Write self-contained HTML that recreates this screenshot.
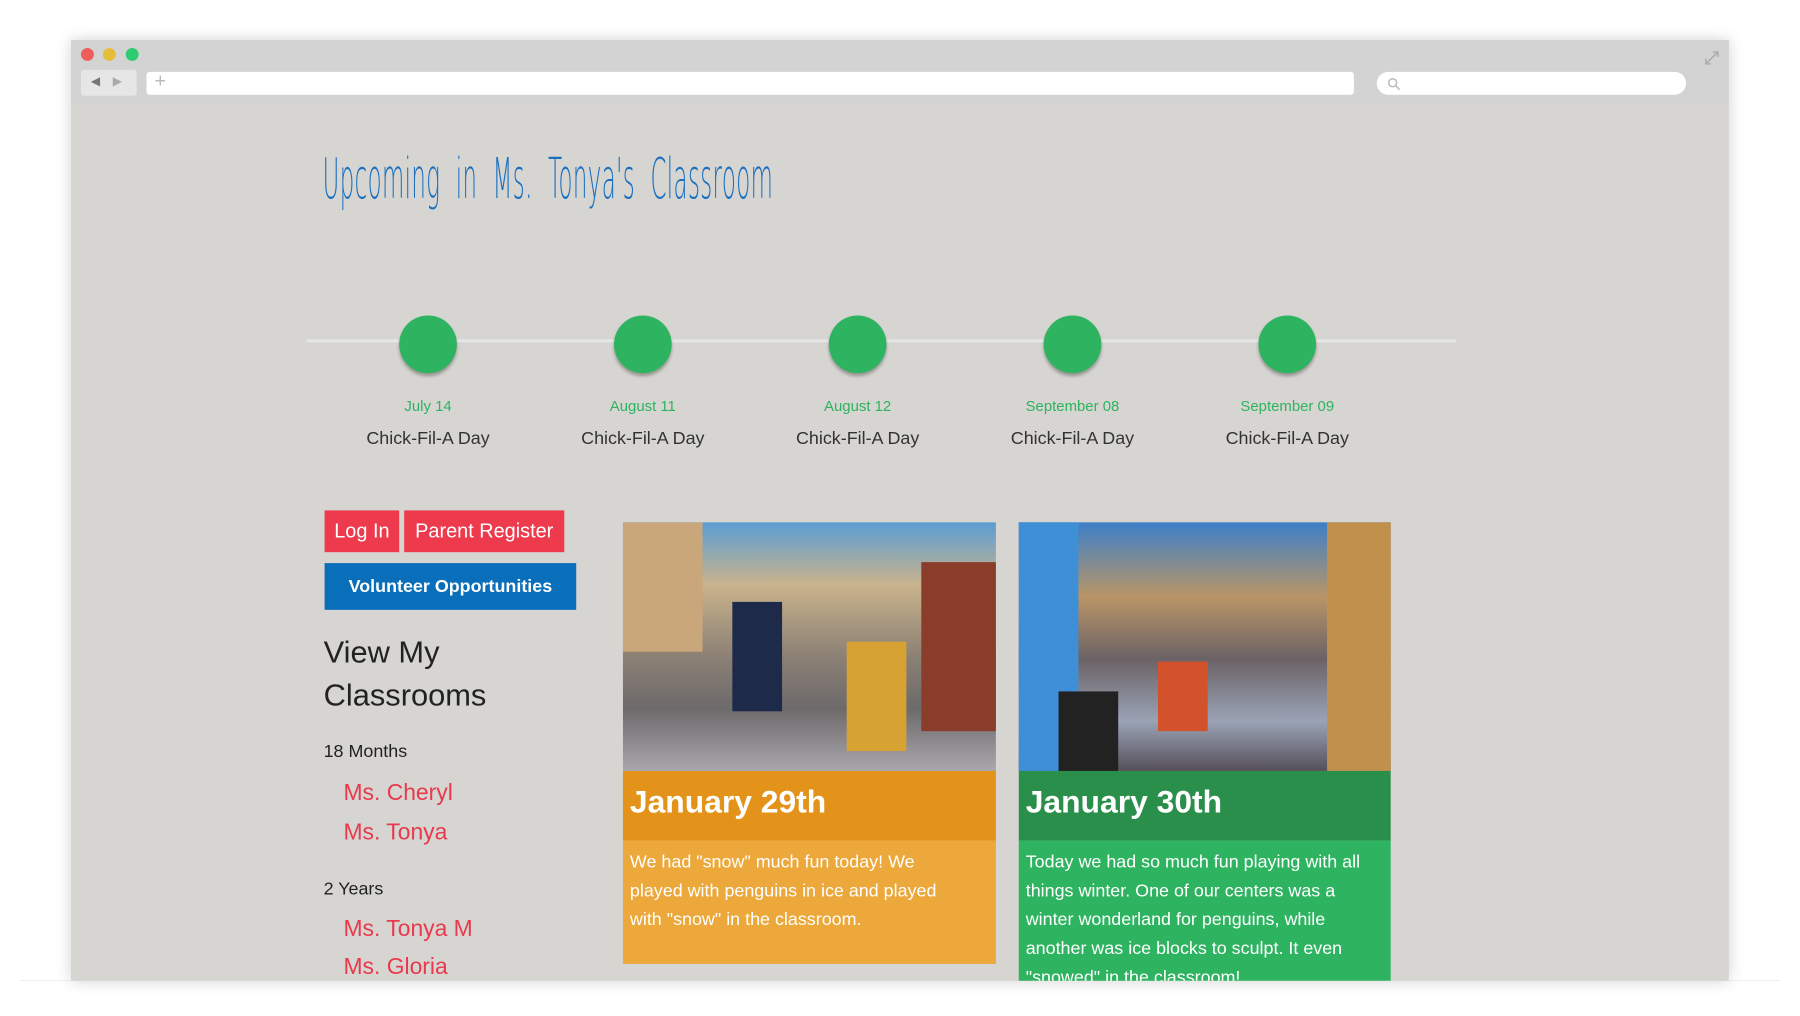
<!DOCTYPE html>
<html><head><meta charset="utf-8"><style>
*{margin:0;padding:0;box-sizing:border-box}
body{width:1800px;height:1016px;background:#fff;position:relative;overflow:hidden;font-family:"Liberation Sans",sans-serif}
.win{position:absolute;left:71px;top:40px;width:1667px;height:946px;background:#d6d5d1;box-shadow:0 0 14px rgba(0,0,0,.18);overflow:hidden;transform:scale(.9945);transform-origin:0 0}
.bar{position:absolute;left:0;top:0;width:100%;height:64px;background:#d3d3d3}
.dot{position:absolute;top:8px;width:13px;height:13px;border-radius:50%}
.abs{position:absolute}
.addr{position:absolute;left:76px;top:32px;width:1214px;height:23px;background:#fff;border-radius:3px}
.srch{position:absolute;left:1313px;top:32px;width:311px;height:23px;background:#fff;border-radius:12px}
.nav{position:absolute;left:10px;top:30px;width:56px;height:26px;background:#e6e6e6;border-radius:3px}
.t{position:absolute;white-space:nowrap}
.circ{position:absolute;top:277px;width:58px;height:58px;border-radius:50%;background:#2eb360;box-shadow:0 3px 3px rgba(0,0,0,.3)}
.date{position:absolute;top:360px;width:200px;text-align:center;color:#2eb360;font-size:15px}
.lab{position:absolute;top:390px;width:200px;text-align:center;color:#333;font-size:18px}
.btn{position:absolute;color:#fff;font-size:20px;text-align:center}
.red{color:#e8394d;font-size:23px}
.body{color:#fff;font-size:18px;line-height:29px}
</style></head><body>
<div style="position:absolute;left:20px;top:980px;width:1760px;height:1px;background:#eee"></div>
<div class="win">
 <div class="bar">
  <div class="dot" style="left:10px;background:#ee5c5b"></div>
  <div class="dot" style="left:32px;background:#e6bd39"></div>
  <div class="dot" style="left:55px;background:#2ecc71"></div>
  <div class="nav"><span class="t" style="left:10px;top:4px;font-size:12px;color:#777">◀</span><span class="t" style="left:32px;top:4px;font-size:12px;color:#aaa">▶</span></div>
  <div class="addr"><span class="t" style="left:8px;top:-1px;font-size:20px;color:#bbb">+</span></div>
  <div class="srch"><svg class="abs" style="left:10px;top:5px" width="14" height="14"><circle cx="6" cy="6" r="4" fill="none" stroke="#bbb" stroke-width="1.5"/><line x1="9" y1="9" x2="13" y2="13" stroke="#bbb" stroke-width="1.5"/></svg></div>
  <svg class="abs" style="left:1642px;top:10px" width="16" height="16"><path d="M2 14L14 2M9 2h5v5M2 9v5h5" fill="none" stroke="#aaa" stroke-width="1.5"/></svg>
 </div>
 <div class="t" style="left:253px;top:108px;font-size:56px;color:#1a6fbf;transform:scaleX(.41);transform-origin:left top;letter-spacing:1px;font-family:'DejaVu Sans',sans-serif;font-weight:200">Upcoming&nbsp; in&nbsp; Ms.&nbsp; Tonya's&nbsp; Classroom</div>
 <div class="abs" style="left:237px;top:301px;width:1156px;height:3px;background:#e6e6e6"></div>
 <div class="circ" style="left:330px"></div><div class="circ" style="left:546px"></div><div class="circ" style="left:762px"></div><div class="circ" style="left:978px"></div><div class="circ" style="left:1194px"></div>
 <div class="date" style="left:259px">July 14</div><div class="date" style="left:475px">August 11</div><div class="date" style="left:691px">August 12</div><div class="date" style="left:907px">September 08</div><div class="date" style="left:1123px">September 09</div>
 <div class="lab" style="left:259px">Chick-Fil-A Day</div><div class="lab" style="left:475px">Chick-Fil-A Day</div><div class="lab" style="left:691px">Chick-Fil-A Day</div><div class="lab" style="left:907px">Chick-Fil-A Day</div><div class="lab" style="left:1123px">Chick-Fil-A Day</div>
 <div class="btn" style="left:255px;top:473px;width:75px;height:42px;line-height:42px;background:#ee3a4d">Log In</div>
 <div class="btn" style="left:335px;top:473px;width:161px;height:42px;line-height:42px;background:#ee3a4d">Parent Register</div>
 <div class="btn" style="left:255px;top:526px;width:253px;height:47px;line-height:47px;background:#0a6fba;font-size:18px;font-weight:bold">Volunteer Opportunities</div>
 <div class="t" style="left:254px;top:594px;font-size:31px;line-height:43px;color:#222">View My<br>Classrooms</div>
 <div class="t" style="left:254px;top:705px;font-size:18px;color:#222">18 Months</div>
 <div class="t red" style="left:274px;top:743px">Ms. Cheryl</div>
 <div class="t red" style="left:274px;top:783px">Ms. Tonya</div>
 <div class="t" style="left:254px;top:843px;font-size:18px;color:#222">2 Years</div>
 <div class="t red" style="left:274px;top:880px">Ms. Tonya M</div>
 <div class="t red" style="left:274px;top:918px">Ms. Gloria</div>
 <div class="abs" style="left:555px;top:485px;width:375px;height:250px;background:linear-gradient(180deg,#5b9dd4 0%,#c9b38c 25%,#8a7f74 55%,#6d6a6b 75%,#a9a7ad 100%)">
  <div class="abs" style="left:0;top:0;width:80px;height:130px;background:#caa77a"></div>
  <div class="abs" style="left:110px;top:80px;width:50px;height:110px;background:#1d2a4a"></div>
  <div class="abs" style="left:225px;top:120px;width:60px;height:110px;background:#d6a233"></div>
  <div class="abs" style="left:300px;top:40px;width:75px;height:170px;background:#8b3d2c"></div>
 </div>
 <div class="abs" style="left:555px;top:735px;width:375px;height:70px;background:#e3931a"><div class="t" style="left:7px;top:13px;font-size:32px;font-weight:bold;color:#fff">January 29th</div></div>
 <div class="abs body" style="left:555px;top:805px;width:375px;height:124px;background:#eca83a;padding:7px 40px 7px 7px">We had "snow" much fun today! We played with penguins in ice and played with "snow" in the classroom.</div>
 <div class="abs" style="left:953px;top:485px;width:374px;height:250px;background:linear-gradient(180deg,#3d7fc8 0%,#b99566 30%,#6b6266 55%,#9aa3b5 80%,#55505a 100%)">
  <div class="abs" style="left:0;top:0;width:60px;height:250px;background:#3f8fd6"></div>
  <div class="abs" style="left:310px;top:0;width:64px;height:250px;background:#c1904d"></div>
  <div class="abs" style="left:140px;top:140px;width:50px;height:70px;background:#d2522c"></div>
  <div class="abs" style="left:40px;top:170px;width:60px;height:80px;background:#222"></div>
 </div>
 <div class="abs" style="left:953px;top:735px;width:374px;height:70px;background:#2a8f4b"><div class="t" style="left:7px;top:13px;font-size:32px;font-weight:bold;color:#fff">January 30th</div></div>
 <div class="abs body" style="left:953px;top:805px;width:374px;height:160px;background:#2eb360;padding:7px 7px">Today we had so much fun playing with all things winter. One of our centers was a winter wonderland for penguins, while another was ice blocks to sculpt. It even "snowed" in the classroom!</div>
</div>
</body></html>
